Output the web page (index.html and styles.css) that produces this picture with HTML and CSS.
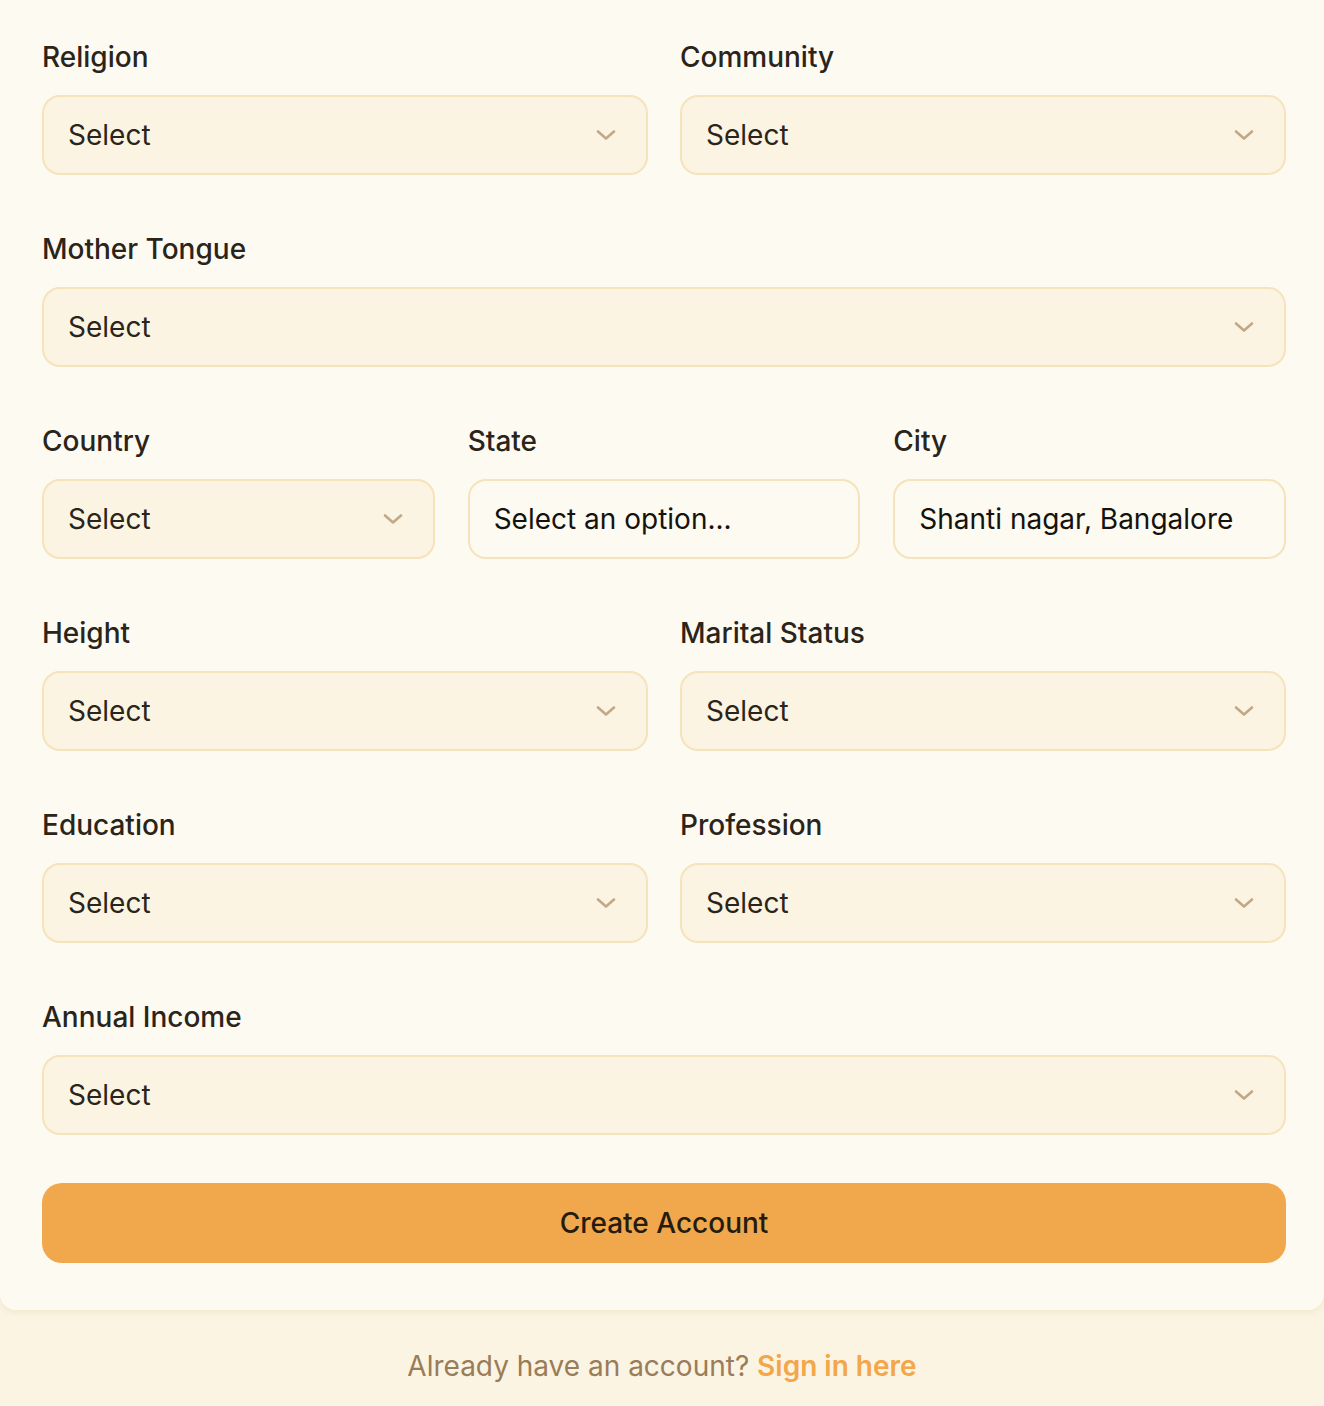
FILE: index.html
```html
<!DOCTYPE html>
<html lang="en">
<head>
<meta charset="utf-8">
<title>Create Account</title>
<link rel="stylesheet" href="styles.css">
</head>
<body>
<main class="page">
  <form class="card">
    <div class="row cols-2">
      <div class="field">
        <label class="label">Religion</label>
        <div class="select"><span>Select</span><svg class="chev" viewBox="0 0 20 10"><path d="M2 1.5 L10 8.5 L18 1.5"/></svg></div>
      </div>
      <div class="field">
        <label class="label">Community</label>
        <div class="select"><span>Select</span><svg class="chev" viewBox="0 0 20 10"><path d="M2 1.5 L10 8.5 L18 1.5"/></svg></div>
      </div>
    </div>

    <div class="row">
      <div class="field">
        <label class="label">Mother Tongue</label>
        <div class="select"><span>Select</span><svg class="chev" viewBox="0 0 20 10"><path d="M2 1.5 L10 8.5 L18 1.5"/></svg></div>
      </div>
    </div>

    <div class="row cols-3">
      <div class="field">
        <label class="label">Country</label>
        <div class="select"><span>Select</span><svg class="chev" viewBox="0 0 20 10"><path d="M2 1.5 L10 8.5 L18 1.5"/></svg></div>
      </div>
      <div class="field">
        <label class="label">State</label>
        <input class="input" type="text" value="Select an option...">
      </div>
      <div class="field">
        <label class="label">City</label>
        <input class="input" type="text" value="Shanti nagar, Bangalore">
      </div>
    </div>

    <div class="row cols-2">
      <div class="field">
        <label class="label">Height</label>
        <div class="select"><span>Select</span><svg class="chev" viewBox="0 0 20 10"><path d="M2 1.5 L10 8.5 L18 1.5"/></svg></div>
      </div>
      <div class="field">
        <label class="label">Marital Status</label>
        <div class="select"><span>Select</span><svg class="chev" viewBox="0 0 20 10"><path d="M2 1.5 L10 8.5 L18 1.5"/></svg></div>
      </div>
    </div>

    <div class="row cols-2">
      <div class="field">
        <label class="label">Education</label>
        <div class="select"><span>Select</span><svg class="chev" viewBox="0 0 20 10"><path d="M2 1.5 L10 8.5 L18 1.5"/></svg></div>
      </div>
      <div class="field">
        <label class="label">Profession</label>
        <div class="select"><span>Select</span><svg class="chev" viewBox="0 0 20 10"><path d="M2 1.5 L10 8.5 L18 1.5"/></svg></div>
      </div>
    </div>

    <div class="row">
      <div class="field">
        <label class="label">Annual Income</label>
        <div class="select"><span>Select</span><svg class="chev" viewBox="0 0 20 10"><path d="M2 1.5 L10 8.5 L18 1.5"/></svg></div>
      </div>
    </div>

    <button type="button" class="submit">Create Account</button>
  </form>

  <p class="footer">Already have an account? <a href="#" class="link">Sign in here</a></p>
</main>
</body>
</html>
```

FILE: styles.css
```css
* { box-sizing: border-box; }

html, body {
  margin: 0;
  padding: 0;
}

body {
  background: #fbf4e3;
  font-family: Inter, "Noto Sans", "Liberation Sans", sans-serif;
  color: #2a2419;
}

.page {
  display: flex;
  flex-direction: column;
}

.card {
  background: #fdfaf2;
  border-radius: 0 0 16px 16px;
  box-shadow: 0 2px 6px rgba(214, 180, 120, 0.22);
  padding: 37px 38px 47px 42px;
  display: flex;
  flex-direction: column;
  gap: 54px;
}

.row {
  display: grid;
  grid-template-columns: 1fr;
  column-gap: 32px;
}

.row.cols-2 { grid-template-columns: 1fr 1fr; }
.row.cols-3 { grid-template-columns: 1fr 1fr 1fr; column-gap: 33px; }

.field {
  display: flex;
  flex-direction: column;
  gap: 18px;
}

.label {
  font-size: 28px;
  font-weight: 500;
  line-height: 40px;
  color: #2a2419;
}

.select,
.input {
  height: 80px;
  border: 2px solid #f5e3bb;
  border-radius: 18px;
  font-family: inherit;
  font-size: 28px;
  line-height: 40px;
  padding: 0 30px 0 24px;
}

.select {
  background: #fcf4e2;
  display: flex;
  align-items: center;
  justify-content: space-between;
  color: #2b2519;
}

.input {
  background: #fdfaf2;
  color: #15120e;
  width: 100%;
  outline: none;
}

.chev {
  width: 20px;
  height: 10px;
  fill: none;
  stroke: #c2a886;
  stroke-width: 2.6;
  stroke-linecap: round;
  stroke-linejoin: round;
}

.submit {
  height: 80px;
  border: none;
  border-radius: 20px;
  background: #f1a74c;
  color: #251c10;
  font-family: inherit;
  font-size: 28px;
  font-weight: 500;
  margin-top: -6px;
}

.footer {
  margin: 36px 0 0;
  text-align: center;
  font-size: 28px;
  line-height: 40px;
  color: #9a7c58;
}

.link {
  color: #f3a64a;
  font-weight: 600;
  text-decoration: none;
}
```
